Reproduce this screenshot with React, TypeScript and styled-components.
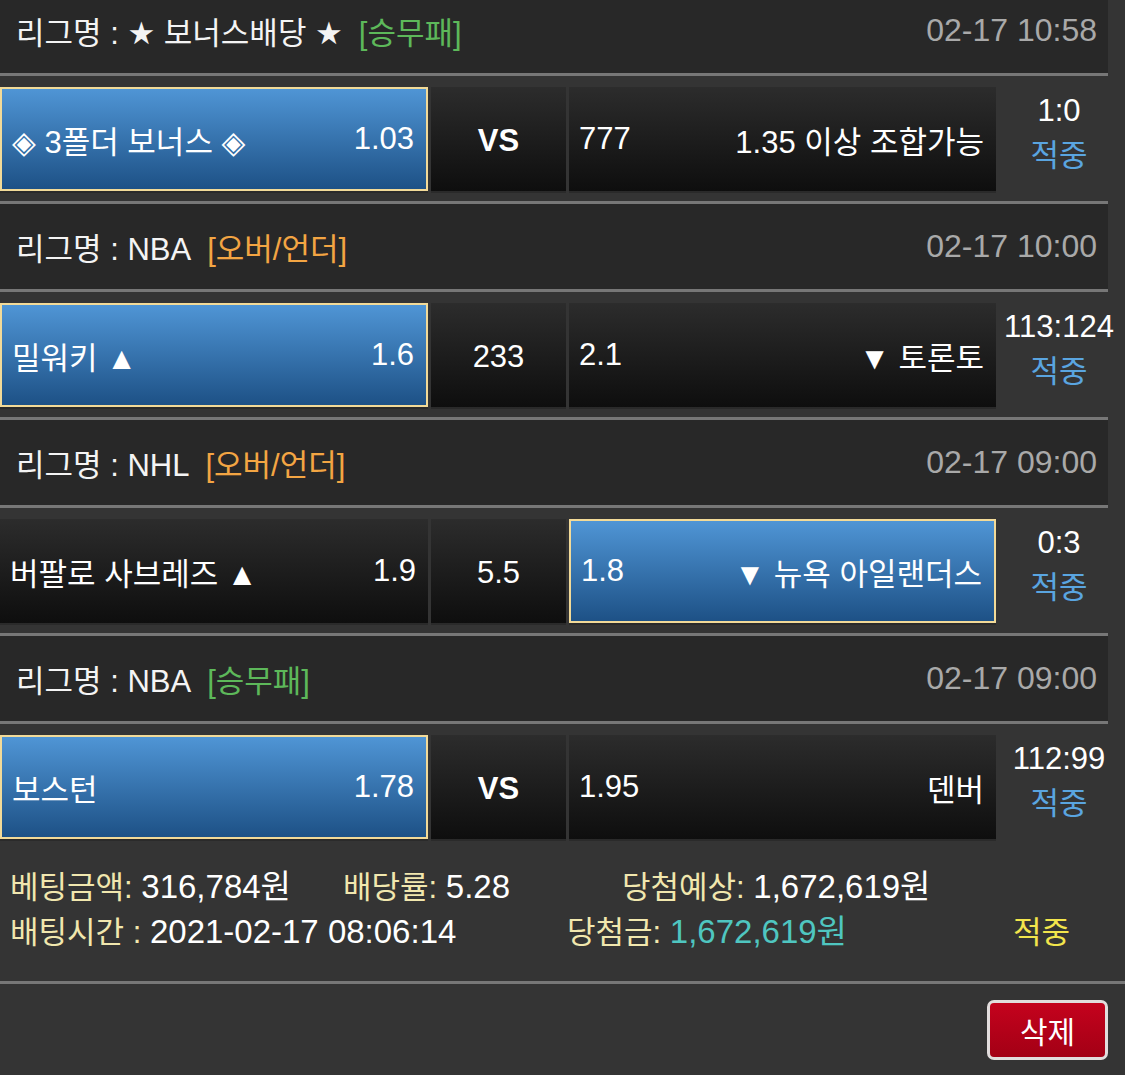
import React from 'react'
import styled, { createGlobalStyle, css } from 'styled-components'

type Tone = 'green' | 'orange'

interface Match {
  league: string
  tag: string
  tone: Tone
  time: string
  home: string
  homeOdds: string
  line: string
  lineBold?: boolean
  awayOdds: string
  away: string
  pick: 'home' | 'away'
  score: string
}

const matches: Match[] = [
  {
    league: '★ 보너스배당 ★',
    tag: '[승무패]',
    tone: 'green',
    time: '02-17 10:58',
    home: '◈ 3폴더 보너스 ◈',
    homeOdds: '1.03',
    line: 'VS',
    lineBold: true,
    awayOdds: '777',
    away: '1.35 이상 조합가능',
    pick: 'home',
    score: '1:0'
  },
  {
    league: 'NBA',
    tag: '[오버/언더]',
    tone: 'orange',
    time: '02-17 10:00',
    home: '밀워키 ▲',
    homeOdds: '1.6',
    line: '233',
    awayOdds: '2.1',
    away: '▼ 토론토',
    pick: 'home',
    score: '113:124'
  },
  {
    league: 'NHL',
    tag: '[오버/언더]',
    tone: 'orange',
    time: '02-17 09:00',
    home: '버팔로 사브레즈 ▲',
    homeOdds: '1.9',
    line: '5.5',
    awayOdds: '1.8',
    away: '▼ 뉴욕 아일랜더스',
    pick: 'away',
    score: '0:3'
  },
  {
    league: 'NBA',
    tag: '[승무패]',
    tone: 'green',
    time: '02-17 09:00',
    home: '보스턴',
    homeOdds: '1.78',
    line: 'VS',
    lineBold: true,
    awayOdds: '1.95',
    away: '덴버',
    pick: 'home',
    score: '112:99'
  }
]

const GlobalStyle = createGlobalStyle`
  html, body {
    margin: 0;
    padding: 0;
    background: #343434;
  }
  body {
    font-family: "Liberation Sans", "DejaVu Sans", "Noto Sans CJK KR", sans-serif;
    color: #f2f2f2;
  }
`

const Page = styled.div`
  width: 1125px;
  height: 1075px;
  overflow: hidden;
  background: #343434;
`

// the first header is cut off at the top of the screenshot
const List = styled.div`
  margin-top: -12px;
`

const LeagueHeader = styled.div<{ $first?: boolean }>`
  width: 1081px;
  height: 85px;
  display: flex;
  align-items: center;
  justify-content: space-between;
  padding: 0 11px 0 16px;
  background: #282828;
  border-top: 3px solid #777;
  border-bottom: 3px solid #777;
  font-size: 31px;
  color: #f4f4f4;
  ${p => p.$first && css`border-top: none;`}
`

const Tag = styled.span<{ $tone: Tone }>`
  margin-left: 16px;
  color: ${p => (p.$tone === 'green' ? '#5db85a' : '#f3a543')};
`

const Time = styled.span`
  color: #a9a9a9;
  font-size: 32px;
`

const MatchRow = styled.div<{ $last?: boolean }>`
  display: grid;
  grid-template-columns: 428px 135px 427px 1fr;
  column-gap: 3px;
  padding: 11px 0 10px;
  ${p => p.$last && css`padding-bottom: 0;`}
`

const Pick = styled.div<{ $selected?: boolean }>`
  height: 104px;
  box-sizing: border-box;
  display: flex;
  align-items: center;
  justify-content: space-between;
  padding: 0 12px 0 10px;
  font-size: 31px;
  color: #fff;
  background: linear-gradient(#2c2c2c, #0e0e0e);
  box-shadow: 0 2px 0 #2a2a2a;
  ${p =>
    p.$selected &&
    css`
      background: linear-gradient(#4f95d5, #1d5186);
      border: 2px solid #f2da98;
    `}
`

const Line = styled.div<{ $bold?: boolean }>`
  height: 104px;
  display: flex;
  align-items: center;
  justify-content: center;
  padding-top: 4px;
  box-sizing: border-box;
  font-size: 31px;
  font-weight: ${p => (p.$bold ? 700 : 400)};
  color: #fff;
  background: linear-gradient(#2c2c2c, #0e0e0e);
  box-shadow: 0 2px 0 #2a2a2a;
`

const Score = styled.div`
  display: flex;
  flex-direction: column;
  align-items: center;
  padding-top: 1px;
  margin-left: -6px;
  font-size: 31px;
  line-height: 45px;
  color: #fff;
`

const Result = styled.span<{ $tone?: 'blue' | 'yellow' }>`
  color: ${p => (p.$tone === 'yellow' ? '#f2e54c' : '#5aa5e0')};
`

const Summary = styled.div`
  padding: 21px 0 31px 10px;
  border-bottom: 3px solid #777;
  font-size: 31px;
`

const SummaryLine = styled.div<{ $cols: string }>`
  display: grid;
  grid-template-columns: ${p => p.$cols};
  height: 45px;
  align-items: center;
  white-space: nowrap;
`

const Label = styled.span`
  color: #f1e7ae;
`

const Value = styled.span<{ $teal?: boolean }>`
  font-size: 33px;
  color: ${p => (p.$teal ? '#4fc6c0' : '#fff')};
`

const Actions = styled.div`
  display: flex;
  justify-content: flex-end;
  padding: 16px 17px 0 0;
`

const DeleteButton = styled.button`
  width: 121px;
  height: 60px;
  box-sizing: border-box;
  border: 3px solid #e2dddd;
  border-radius: 7px;
  background: linear-gradient(#c4021d, #a30015);
  color: #fff;
  font-family: inherit;
  font-size: 30px;
  cursor: pointer;
`

export default function App() {
  return (
    <Page>
      <GlobalStyle />
      <List>
        {matches.map((m, i) => (
          <React.Fragment key={i}>
            <LeagueHeader $first={i === 0}>
              <span>
                리그명 : {m.league}
                <Tag $tone={m.tone}>{m.tag}</Tag>
              </span>
              <Time>{m.time}</Time>
            </LeagueHeader>
            <MatchRow $last={i === matches.length - 1}>
              <Pick $selected={m.pick === 'home'}>
                <span>{m.home}</span>
                <span>{m.homeOdds}</span>
              </Pick>
              <Line $bold={m.lineBold}>{m.line}</Line>
              <Pick $selected={m.pick === 'away'}>
                <span>{m.awayOdds}</span>
                <span>{m.away}</span>
              </Pick>
              <Score>
                <span>{m.score}</span>
                <Result>적중</Result>
              </Score>
            </MatchRow>
          </React.Fragment>
        ))}
      </List>
      <Summary>
        <SummaryLine $cols="333px 279px auto">
          <span>
            <Label>베팅금액: </Label>
            <Value>316,784원</Value>
          </span>
          <span>
            <Label>배당률: </Label>
            <Value>5.28</Value>
          </span>
          <span>
            <Label>당첨예상: </Label>
            <Value>1,672,619원</Value>
          </span>
        </SummaryLine>
        <SummaryLine $cols="557px 446px auto">
          <span>
            <Label>배팅시간 : </Label>
            <Value>2021-02-17 08:06:14</Value>
          </span>
          <span>
            <Label>당첨금: </Label>
            <Value $teal>1,672,619원</Value>
          </span>
          <Result $tone="yellow">적중</Result>
        </SummaryLine>
      </Summary>
      <Actions>
        <DeleteButton>삭제</DeleteButton>
      </Actions>
    </Page>
  )
}
